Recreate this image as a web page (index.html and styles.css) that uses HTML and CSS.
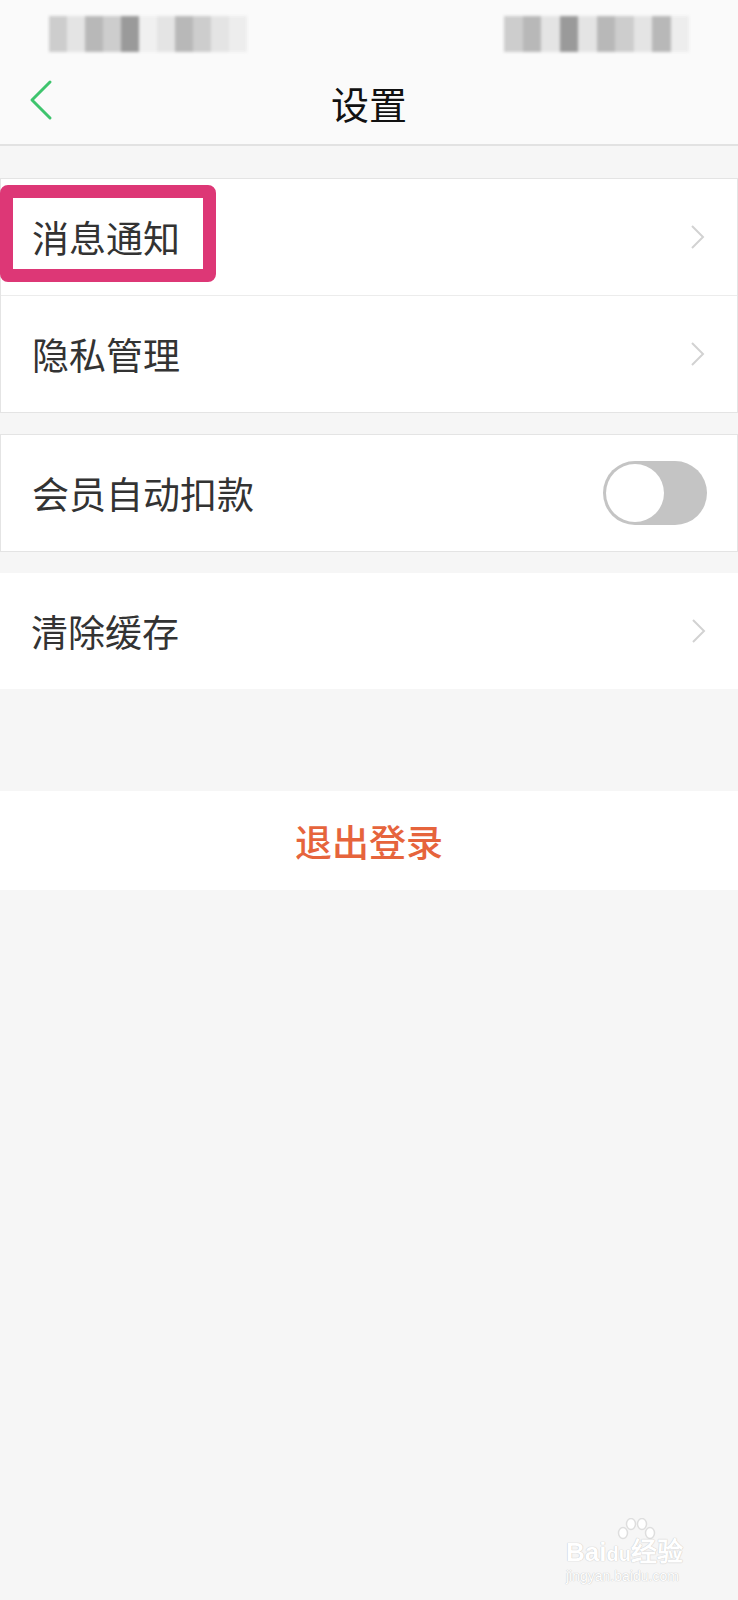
FILE: index.html
```html
<!DOCTYPE html>
<html lang="zh-CN">
<head>
    <meta charset="UTF-8">
    <meta name="viewport" content="width=device-width, initial-scale=1.0">
    <title>设置</title>
    <link rel="stylesheet" href="styles.css">
</head>
<body>
    <div class="status-bar">
        <div class="mosaic mosaic-left">
            <span class="c2"></span><span class="c1"></span><span class="c3"></span><span class="c2"></span><span class="c4"></span><span class="c5"></span><span class="c1"></span><span class="c3"></span><span class="c2"></span><span class="c1"></span><span class="c6"></span>
        </div>
        <div class="mosaic mosaic-right">
            <span class="c2"></span><span class="c3"></span><span class="c1"></span><span class="c4"></span><span class="c1"></span><span class="c3"></span><span class="c2"></span><span class="c1"></span><span class="c3"></span><span class="c6"></span>
        </div>
    </div>

    <div class="nav">
        <svg class="back" width="26" height="42" viewBox="0 0 26 42">
            <path d="M21 3 L3 21 L21 39" fill="none" stroke="#3ec46d" stroke-width="3" stroke-linecap="round" stroke-linejoin="round"/>
        </svg>
        <h1>设置</h1>
    </div>

    <div class="group bordered">
        <div class="row">
            <span class="label">消息通知</span>
            <svg class="arrow" width="18" height="26" viewBox="0 0 18 26"><path d="M3 2 L14 13 L3 24" fill="none" stroke="#d2d2d2" stroke-width="2"/></svg>
            <div class="highlight"></div>
        </div>
        <div class="row">
            <span class="label">隐私管理</span>
            <svg class="arrow" width="18" height="26" viewBox="0 0 18 26"><path d="M3 2 L14 13 L3 24" fill="none" stroke="#d2d2d2" stroke-width="2"/></svg>
        </div>
    </div>

    <div class="group bordered">
        <div class="row">
            <span class="label">会员自动扣款</span>
            <div class="toggle"><div class="knob"></div></div>
        </div>
    </div>

    <div class="group">
        <div class="row">
            <span class="label">清除缓存</span>
            <svg class="arrow" width="18" height="26" viewBox="0 0 18 26"><path d="M3 2 L14 13 L3 24" fill="none" stroke="#d2d2d2" stroke-width="2"/></svg>
        </div>
    </div>

    <div class="logout">退出登录</div>

    <div class="watermark">
        <svg class="paw" width="40" height="28" viewBox="0 0 40 28">
            <ellipse cx="7" cy="15" rx="4.5" ry="5.5" fill="#fff" stroke="#dedede" stroke-width="1.5"/>
            <ellipse cx="15" cy="6" rx="4.5" ry="5.5" fill="#fff" stroke="#dedede" stroke-width="1.5"/>
            <ellipse cx="26" cy="6" rx="4.5" ry="5.5" fill="#fff" stroke="#dedede" stroke-width="1.5"/>
            <ellipse cx="34" cy="15" rx="4.5" ry="5.5" fill="#fff" stroke="#dedede" stroke-width="1.5"/>
        </svg>
        <div class="brand">Bai<span class="du">du</span>经验</div>
        <div class="site">jingyan.baidu.com</div>
    </div>
</body>
</html>
```

FILE: styles.css
```css
body {
    margin: 0;
    background-color: #f6f6f6;
    font-family: "Noto Sans CJK SC", "Noto Sans", sans-serif;
    color: #333;
    position: relative;
    min-height: 1600px;
}

/* status bar (blurred in the screenshot) */
.status-bar {
    height: 60px;
    background-color: #fafafa;
    display: flex;
    justify-content: space-between;
    align-items: flex-start;
    padding: 16px 49px 0 49px;
    box-sizing: border-box;
}

.mosaic {
    display: flex;
    height: 36px;
    filter: blur(1.5px);
}

.mosaic-left {
    width: 198px;
}

.mosaic-right {
    width: 185px;
}

.mosaic span {
    flex: 1;
}

.c1 { background-color: #e4e4e4; }
.c2 { background-color: #cdcdcd; }
.c3 { background-color: #b8b8b8; }
.c4 { background-color: #9a9a9a; }
.c5 { background-color: #f0f0f0; }
.c6 { background-color: #ededed; }

.nav {
    height: 84px;
    background-color: #fafafa;
    border-bottom: 2px solid #e2e2e2;
    display: flex;
    align-items: center;
    justify-content: center;
    position: relative;
}

.nav h1 {
    margin: 0;
    font-size: 38px;
    font-weight: 400;
    color: #111;
}

.back {
    position: absolute;
    left: 29px;
    top: 19px;
}

.group {
    margin-top: 21px;
    background-color: #fff;
}

.nav + .group {
    margin-top: 32px;
}

.bordered {
    border: 1px solid #e4e4e4;
}

.row {
    height: 116px;
    display: flex;
    align-items: center;
    justify-content: space-between;
    padding: 0 30px 0 31px;
    position: relative;
}

.bordered .row + .row {
    border-top: 1px solid #ececec;
}

.label {
    font-size: 37px;
    color: #333;
}

.highlight {
    position: absolute;
    left: -1px;
    top: 6px;
    width: 190px;
    height: 71px;
    border: 13px solid #dd3776;
    border-radius: 8px;
}

.toggle {
    width: 104px;
    height: 64px;
    border-radius: 32px;
    background-color: #c4c4c4;
    display: flex;
    align-items: center;
    padding-left: 3px;
    box-sizing: border-box;
}

.knob {
    width: 58px;
    height: 58px;
    border-radius: 50%;
    background-color: #fff;
}

.logout {
    margin-top: 102px;
    height: 99px;
    background-color: #fff;
    display: flex;
    align-items: center;
    justify-content: center;
    font-size: 37px;
    font-weight: 500;
    color: #e6643c;
}

/* baidu watermark */
.watermark {
    position: absolute;
    left: 566px;
    top: 1518px;
    width: 134px;
    white-space: nowrap;
    color: #fff;
    text-shadow: 0 0 1px #c8c8c8, 0 0 1px #c8c8c8;
}

.paw {
    display: block;
    margin-left: 50px;
}

.brand {
    font-family: "Liberation Sans", sans-serif;
    font-size: 26px;
    font-weight: 700;
    line-height: 24px;
    margin-top: -6px;
}

.du {
    font-size: 20px;
}

.site {
    font-family: "Liberation Sans", sans-serif;
    font-size: 14px;
    line-height: 20px;
}
```
